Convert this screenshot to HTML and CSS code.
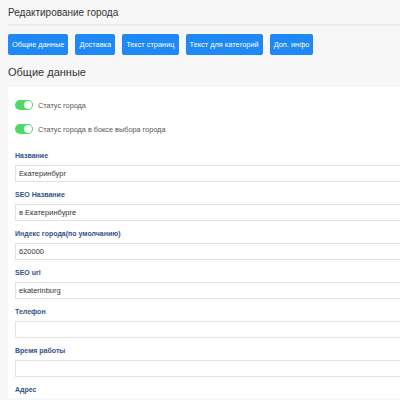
FILE: index.html
```html
<!DOCTYPE html>
<html lang="ru">
<head>
<meta charset="utf-8">
<link rel="stylesheet" href="styles.css">
</head>
<body>
<div class="page">
  <h1 class="title">Редактирование города</h1>
  <div class="tabs">
    <button class="tab">Общие данные</button>
    <button class="tab">Доставка</button>
    <button class="tab">Текст страниц</button>
    <button class="tab">Текст для категорий</button>
    <button class="tab">Доп. инфо</button>
  </div>
  <h2 class="section">Общие данные</h2>
  <div class="panel">
    <div class="switch-row"><span class="switch"></span><span class="switch-label">Статус города</span></div>
    <div class="switch-row"><span class="switch"></span><span class="switch-label">Статус города в боксе выбора города</span></div>
    <div class="fields">
      <label class="field-label">Название</label>
      <div class="input">Екатеринбург</div>
      <label class="field-label">SEO Название</label>
      <div class="input">в Екатеринбурге</div>
      <label class="field-label">Индекс города(по умолчанию)</label>
      <div class="input">620000</div>
      <label class="field-label">SEO url</label>
      <div class="input">ekaterinburg</div>
      <label class="field-label">Телефон</label>
      <div class="input"></div>
      <label class="field-label">Время работы</label>
      <div class="input"></div>
      <label class="field-label last">Адрес</label>
    </div>
  </div>
</div>
</body>
</html>
```
FILE: styles.css
```css
html { overflow: hidden; }
body {
  margin: 0;
  background: #f7f7f7;
  font-family: "Liberation Sans", Arial, sans-serif;
  color: #333;
}
.page {
  padding: 0 0 0 8px;
  width: 620px;
}
.title {
  margin: 5px 0 0;
  font-size: 10px;
  line-height: 16px;
  font-weight: normal;
  color: #333;
  padding-bottom: 3px;
  border-bottom: 2px solid #ebebeb;
}
.tabs {
  display: flex;
  gap: 7px;
  margin-top: 8px;
}
.tab {
  height: 21px;
  padding: 0 4px;
  border: none;
  border-radius: 2px;
  background: #1e88f5;
  color: #fff;
  font-family: "Liberation Sans", Arial, sans-serif;
  font-size: 7.4px;
}
.section {
  margin: 9px 0 0;
  font-size: 11px;
  line-height: 16px;
  font-weight: normal;
  color: #333;
}
.panel {
  margin-top: 7px;
  background: #fff;
  padding: 11px 7px 3px;
}
.switch-row {
  display: flex;
  align-items: center;
  gap: 5px;
  height: 14px;
  margin-bottom: 10px;
}
.switch {
  position: relative;
  width: 18px;
  height: 10px;
  border-radius: 5px;
  background: #4cd964;
}
.switch::after {
  content: "";
  position: absolute;
  right: 1px;
  top: 1px;
  width: 8px;
  height: 8px;
  border-radius: 50%;
  background: #fff;
}
.switch-label {
  font-size: 7.3px;
  color: #555;
}
.fields {
  display: flex;
  flex-direction: column;
  margin-top: 14px;
}
.field-label {
  font-size: 7px;
  line-height: 10px;
  font-weight: bold;
  color: #34508a;
  margin-top: 8px;
}
.fields .field-label:first-child { margin-top: 1px; }
.input {
  margin-top: 4px;
  height: 15px;
  border: 1px solid #e2e2e2;
  font-size: 7.5px;
  line-height: 15px;
  padding-left: 3px;
  color: #333;
}
```
